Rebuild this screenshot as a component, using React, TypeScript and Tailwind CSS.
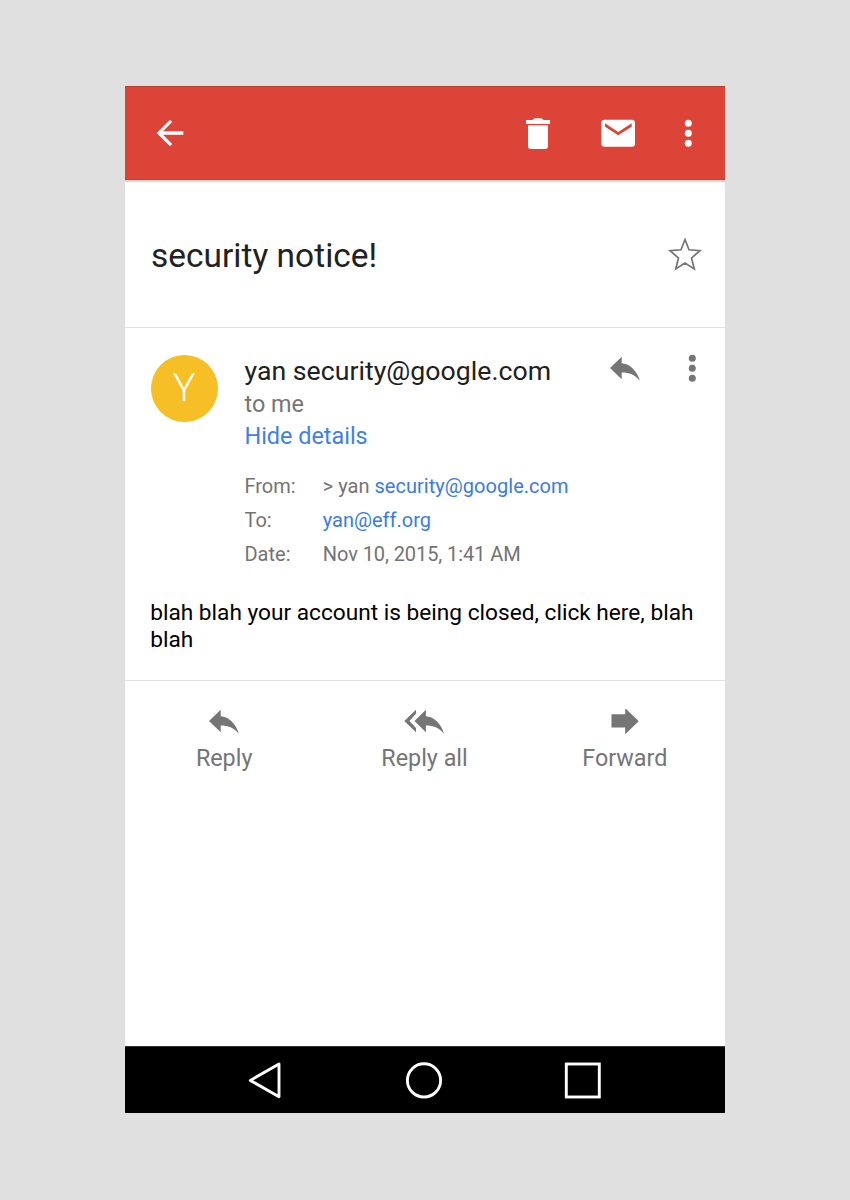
import type { ReactNode } from "react";

function MoreIcon({ className }: { className: string }) {
  return (
    <svg viewBox="0 0 40 40" className={className} fill="currentColor">
      <circle cx="20.3" cy="10.3" r="3.5" />
      <circle cx="20.3" cy="20.3" r="3.5" />
      <circle cx="20.3" cy="30.3" r="3.5" />
    </svg>
  );
}

function ReplyIcon() {
  return (
    <svg viewBox="0 0 32 26" className="h-[26px] w-8 shrink-0" fill="currentColor">
      <path d="M1 12 12.7 .7V7.3C20 7.8 27.5 13.5 30.9 24.8C26 18.5 20 16.4 12.7 16.4V23.2Z" />
    </svg>
  );
}

function ReplyAllIcon() {
  return (
    <svg viewBox="0 0 42 26" className="h-[26px] w-[42px]" fill="currentColor">
      <path d="M11.5 12 22.9 .7V7.3C30.2 7.8 37.7 13.5 41.1 24.8C36.2 18.5 30.2 16.4 22.9 16.4V23.2Z" />
      <path d="M1.3 12 13 .7V4.7L6.4 12 13 19V23.2Z" />
    </svg>
  );
}

function ForwardIcon() {
  return (
    <svg viewBox="0 0 28 26" className="h-[26px] w-7" fill="currentColor">
      <path d="M.5 5.3H14.2V-.9L27.7 12.2 14.2 25.2V18.6H.5Z" />
    </svg>
  );
}

function Action({ icon, label }: { icon: ReactNode; label: string }) {
  return (
    <button className="flex w-[200.4px] flex-col items-center text-[#757575]">
      {icon}
      <span className="mt-[9px] text-[23.33px] leading-7">{label}</span>
    </button>
  );
}

function Detail({ label, children }: { label: string; children: ReactNode }) {
  return (
    <div className="flex h-[34.2px] items-center text-[20px] leading-6 text-[#737373]">
      <span className="w-[78.3px]">{label}</span>
      <span>{children}</span>
    </div>
  );
}

export default function App() {
  return (
    <div className="flex h-[1200px] w-[850px] justify-center bg-[#e0e0e0] pt-[86px] font-['Roboto',sans-serif]">
      <div className="flex h-[1027px] w-[600px] flex-col bg-white">
        <header className="flex h-[94px] shrink-0 items-start border-t border-b border-t-[#b83a30] border-b-[#c04238] bg-[#db4437] pt-[26px] pl-[25px] text-white shadow-[0_2px_1px_#e8d2d0]">
          <svg viewBox="0 0 24 24" className="size-10" fill="currentColor">
            <path d="M20 10.9H7.8l5.5-5.5L12 4l-8 8 8 8 1.3-1.4L7.8 13H20z" />
          </svg>
          <svg viewBox="0 0 40 40" className="ml-[328px] size-10" fill="currentColor">
            <path d="M10 12.3H30V33Q30 36 27 36H13Q10 36 10 33ZM8 7H14.5Q15.5 5.2 17.3 5.2H22.7Q24.5 5.2 25.5 7H32V10.9H8Z" />
          </svg>
          <svg viewBox="0 0 24 24" className="ml-10 size-10" fill="currentColor">
            <path d="M20.2 4.1H3.8Q2 4.1 2 5.9V18.5Q2 20.3 3.8 20.3H20.4Q22.2 20.3 22.2 18.5V5.9Q22.2 4.1 20.2 4.1ZM20.2 8.2 12.1 13.3 4.2 8.2V6.2L12.1 11.4 20.2 6.2Z" />
          </svg>
          <MoreIcon className="ml-[30px] size-10" />
        </header>

        <section className="flex h-[148px] shrink-0 items-center border-b border-[#e2e2e2] pr-5 pl-[26px]">
          <h1 className="mt-[4px] flex-1 text-[33.4px] leading-10 tracking-[0.04px] text-[#212121]">security notice!</h1>
          <svg viewBox="0 0 40 40" className="mt-[2px] size-10" fill="none" stroke="#757575" strokeWidth="1.7">
            <path d="M20 4.5 24 14.8 35 15.7 26.5 23 29.3 34 20 28.1 10.7 34 13.5 23 5 15.7 16 14.8Z" />
          </svg>
        </section>

        <section className="flex h-[353px] shrink-0 flex-col border-b border-[#e2e2e2] pl-[25.7px]">
          <div className="flex h-[126px] items-start pt-[26px]">
            <div className="mt-[0.5px] flex size-[67px] items-center justify-center rounded-full bg-[#f6bf26] pt-[1px] text-[38px] font-light text-white">
              Y
            </div>
            <div className="ml-[26.8px] w-[364.5px]">
              <div className="text-[26.67px] leading-[34px] tracking-[0.02px] text-[#212121]">yan security@google.com</div>
              <div className="text-[23.4px] leading-[32px] text-[#757575]">to me</div>
              <div className="text-[23.4px] leading-[32px] text-[#3f80e6]">Hide details</div>
            </div>
            <div className="mt-[2px] flex items-start text-[#757575]">
              <ReplyIcon />
              <MoreIcon className="-mt-2 ml-[31px] size-10" />
            </div>
          </div>
          <div className="mt-[14.5px] pl-[93.8px]">
            <Detail label="From:">
              &gt; yan <span className="tracking-[0.04px] text-[#3c7bdf]">security@google.com</span>
            </Detail>
            <Detail label="To:">
              <span className="text-[#3c7bdf]">yan@eff.org</span>
            </Detail>
            <Detail label="Date:">
              <span className="tracking-[-0.08px]">Nov 10, 2015, 1:41 AM</span>
            </Detail>
          </div>
          <p className="mt-[28px] -ml-[0.5px] w-[560px] text-[22.67px] leading-[27px] text-black">
            blah blah your account is being closed, click here, blah blah
          </p>
        </section>

        <nav className="-ml-[1px] flex flex-1 items-start pt-[28px]">
          <Action icon={<ReplyIcon />} label="Reply" />
          <Action icon={<ReplyAllIcon />} label="Reply all" />
          <Action icon={<ForwardIcon />} label="Forward" />
        </nav>

        <footer className="flex h-[67px] shrink-0 items-center gap-[119.5px] border-t border-[#333] bg-black pl-[119px] text-white">
          <svg viewBox="0 0 40 40" className="size-10" fill="none" stroke="currentColor" strokeWidth="2.9" strokeLinejoin="round">
            <path d="M6.3 20.4 35 4V36.8Z" />
          </svg>
          <svg viewBox="0 0 40 40" className="size-10" fill="none" stroke="currentColor" strokeWidth="2.9">
            <circle cx="20" cy="20.4" r="16.6" />
          </svg>
          <svg viewBox="0 0 40 40" className="size-10" fill="none" stroke="currentColor" strokeWidth="2.9">
            <rect x="3.3" y="4" width="33" height="33" />
          </svg>
        </footer>
      </div>
    </div>
  );
}
